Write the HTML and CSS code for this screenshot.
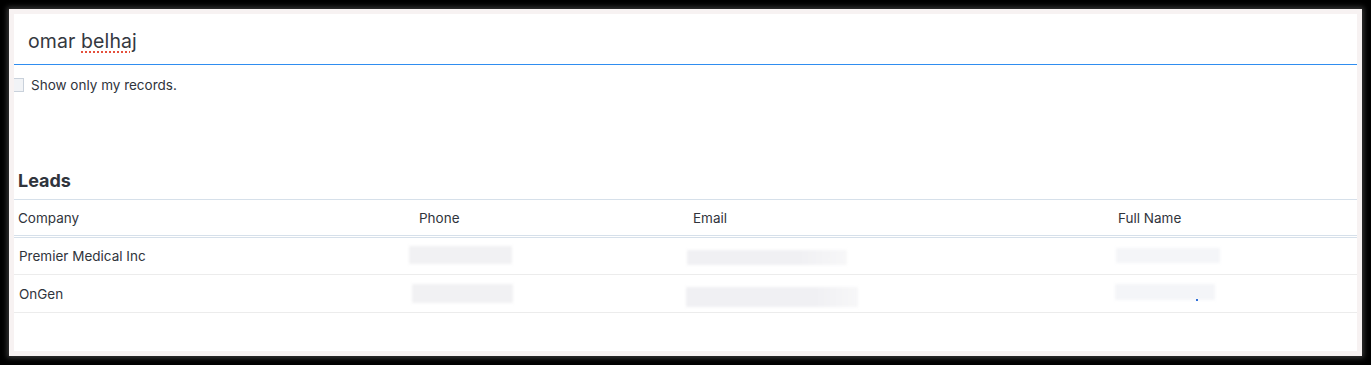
FILE: index.html
```html
<!DOCTYPE html>
<html>
<head>
<meta charset="utf-8">
<link rel="stylesheet" href="styles.css">
</head>
<body>
<div class="frame">
  <div class="panel">
    <div class="search"><span class="query">omar <span class="spell">belhaj</span></span></div>
    <label class="mine"><span class="box"></span>Show only my records.</label>
    <h2 class="title">Leads</h2>
    <div class="table">
      <div class="row head">
        <div class="cell c1">Company</div>
        <div class="cell c2">Phone</div>
        <div class="cell c3">Email</div>
        <div class="cell c4">Full Name</div>
      </div>
      <div class="row r1">
        <div class="cell c1">Premier Medical Inc</div>
        <div class="cell c2"><span class="blur b-phone1"></span></div>
        <div class="cell c3"><span class="blur b-mail1"></span></div>
        <div class="cell c4"><span class="blur b-name1"></span></div>
      </div>
      <div class="row r2">
        <div class="cell c1">OnGen</div>
        <div class="cell c2"><span class="blur b-phone2"></span></div>
        <div class="cell c3"><span class="blur b-mail2"></span></div>
        <div class="cell c4"><span class="blur b-name2"></span><span class="dot"></span></div>
      </div>
    </div>
  </div>
</div>
</body>
</html>
```

FILE: styles.css
```css
html, body { margin: 0; padding: 0; }
body {
  background: #000;
  width: 1371px;
  height: 365px;
  padding: 9px;
  box-sizing: border-box;
  font-family: Inter, Lato, sans-serif;
  color: #30343c;
}
.frame {
  width: 1353px;
  height: 347px;
  background: #f7f2f2;
  padding: 5px;
  box-sizing: border-box;
  box-shadow: 0 0 5px 2px rgba(90, 90, 90, 0.6);
}
.panel {
  background: #fff;
  height: 100%;
  display: flex;
  flex-direction: column;
}
.search {
  border-bottom: 1px solid #2f8df0;
  display: flex;
  align-items: center;
  padding-left: 14px;
  box-sizing: border-box;
  height: 51px;
}
.query { font-size: 19.5px; color: #34383f; padding-top: 4px; letter-spacing: 0.1px; }
.spell {
  text-decoration: underline dotted #e5503c;
  text-underline-offset: 3px;
  text-decoration-thickness: 2px;
}
.mine {
  display: flex;
  align-items: center;
  height: 14px;
  margin-top: 13px;
  font-size: 13.5px;
  color: #30343c;
}
.box {
  width: 9px;
  height: 12px;
  border: 1px solid #c9d1db;
  border-left: 0;
  background: #f1f3f6;
  margin-right: 7px;
}
.title {
  margin: 80px 0 0 4px;
  font-size: 18px;
  font-weight: 700;
  line-height: 18px;
  height: 18px;
  color: #30343c;
}
.table {
  margin-top: 9px;
  border-top: 1px solid #d6e0ea;
}
.row {
  display: grid;
  grid-template-columns: 401px 274px 425px 1fr;
  font-size: 13.5px;
  color: #30343c;
}
.head {
  height: 35px;
  border-bottom: 1px solid #d6e0ea;
  position: relative;
  margin-bottom: 2px;
}
.head::after {
  content: "";
  position: absolute;
  left: 0; right: 0; bottom: -3px;
  border-bottom: 1px solid #d6e0ea;
}
.r1 { height: 36px; border-bottom: 1px solid #ececec; }
.r2 { height: 37px; border-bottom: 1px solid #ececec; }
.cell {
  display: flex;
  align-items: center;
  padding-left: 4px;
  position: relative;
}
.r1 .c1, .r2 .c1 { padding-left: 5px; }
.blur {
  display: block;
  background: #eeeff2;
  filter: blur(1.5px);
  position: absolute;
}
.b-phone1 { left: -6px; top: 8px; width: 103px; height: 18px; background: #f1f1f3; }
.b-mail1 { left: -2px; top: 12px; width: 160px; height: 15px; background: linear-gradient(90deg, #f0f0f3 70%, #f7f7f8); }
.b-name1 { left: 2px; top: 10px; width: 104px; height: 15px; background: #f4f5f8; }
.b-phone2 { left: -3px; top: 9px; width: 101px; height: 19px; background: #f1f1f3; }
.b-mail2 { left: -3px; top: 12px; width: 172px; height: 20px; background: linear-gradient(90deg, #f0f0f3 75%, #f7f7f8); }
.b-name2 { left: 1px; top: 9px; width: 100px; height: 16px; background: #f4f5f8; }
.dot {
  position: absolute;
  left: 82px; top: 24px;
  width: 2px; height: 2px;
  background: #2f6fd8;
}
```
